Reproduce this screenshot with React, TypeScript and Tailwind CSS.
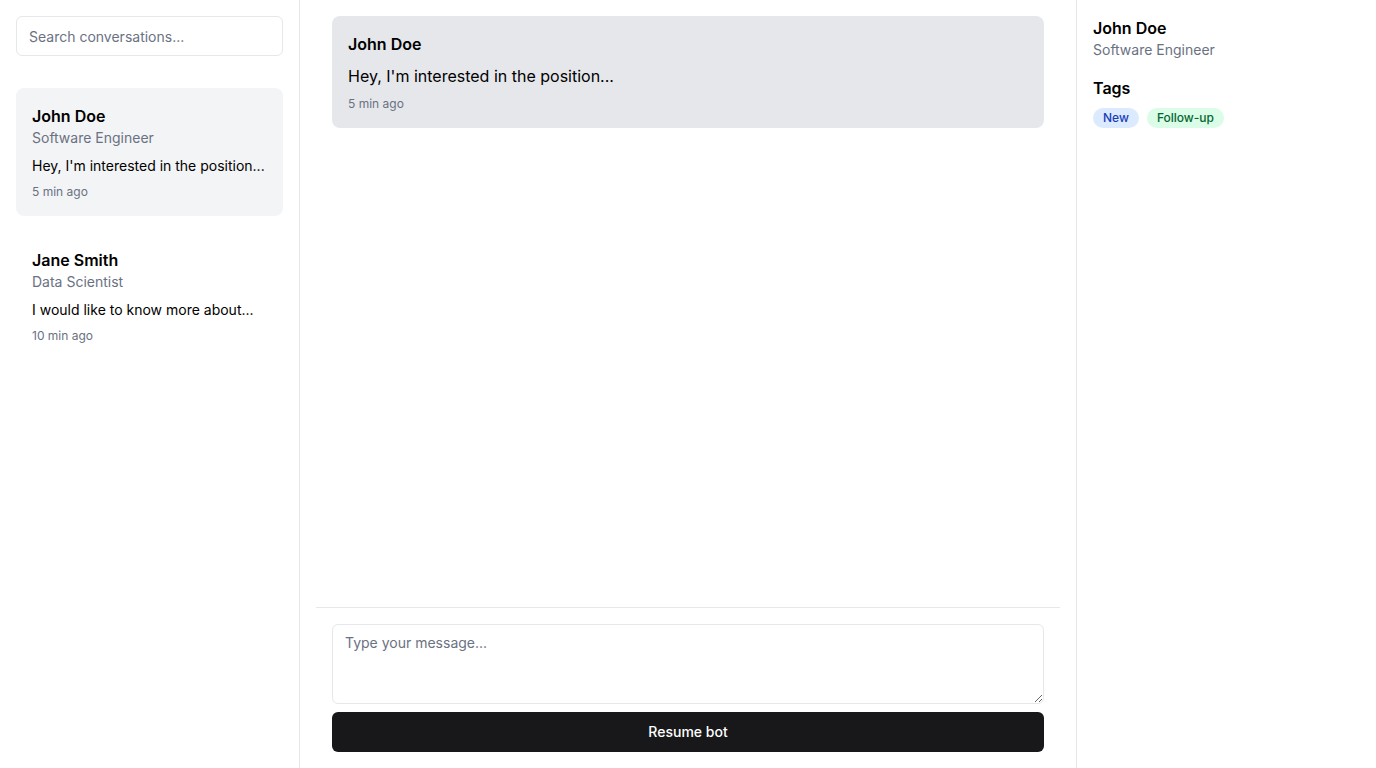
import { useState } from "react";

type Conversation = {
  id: number;
  name: string;
  role: string;
  preview: string;
  time: string;
};

const conversations: Conversation[] = [
  {
    id: 1,
    name: "John Doe",
    role: "Software Engineer",
    preview: "Hey, I'm interested in the position...",
    time: "5 min ago",
  },
  {
    id: 2,
    name: "Jane Smith",
    role: "Data Scientist",
    preview: "I would like to know more about...",
    time: "10 min ago",
  },
];

export default function App() {
  const [active, setActive] = useState(1);
  const current = conversations.find((c) => c.id === active) ?? conversations[0];

  return (
    <div className="flex h-screen bg-white text-black font-['Inter',sans-serif]">
      {/* Sidebar */}
      <aside className="w-[300px] shrink-0 border-r border-gray-200 p-4">
        <input
          type="text"
          placeholder="Search conversations..."
          className="w-full h-10 rounded-md border border-gray-200 px-3 text-sm placeholder:text-gray-500 outline-none"
        />
        <div className="mt-8 space-y-4">
          {conversations.map((c) => (
            <button
              key={c.id}
              onClick={() => setActive(c.id)}
              className={`block w-full text-left rounded-lg p-4 ${
                c.id === active ? "bg-gray-100" : "bg-white"
              }`}
            >
              <p className="font-semibold text-base leading-6">{c.name}</p>
              <p className="text-sm text-gray-500">{c.role}</p>
              <p className="mt-2 text-sm truncate">{c.preview}</p>
              <p className="mt-2 text-xs text-gray-500">{c.time}</p>
            </button>
          ))}
        </div>
      </aside>

      {/* Chat */}
      <main className="flex-1 flex flex-col px-4 min-w-0">
        <div className="flex-1 p-4 overflow-y-auto">
          <div className="rounded-lg bg-gray-200 p-4">
            <p className="font-semibold">{current.name}</p>
            <p className="mt-2 text-base">{current.preview}</p>
            <p className="mt-2 text-xs text-gray-500">{current.time}</p>
          </div>
        </div>
        <div className="border-t border-gray-200 p-4 space-y-2">
          <textarea
            placeholder="Type your message..."
            className="block w-full h-20 rounded-md border border-gray-200 px-3 py-2 text-sm placeholder:text-gray-500 outline-none"
          />
          <button className="w-full h-10 rounded-md bg-zinc-900 text-white text-sm font-medium">
            Resume bot
          </button>
        </div>
      </main>

      {/* Details */}
      <aside className="w-[300px] shrink-0 border-l border-gray-200 p-4">
        <p className="font-semibold">{current.name}</p>
        <p className="text-sm text-gray-500">{current.role}</p>
        <p className="mt-4 font-semibold">Tags</p>
        <div className="mt-2 flex gap-2">
          <span className="rounded-full bg-blue-100 text-blue-800 px-2.5 py-0.5 text-xs font-medium">
            New
          </span>
          <span className="rounded-full bg-green-100 text-green-800 px-2.5 py-0.5 text-xs font-medium">
            Follow-up
          </span>
        </div>
      </aside>
    </div>
  );
}
